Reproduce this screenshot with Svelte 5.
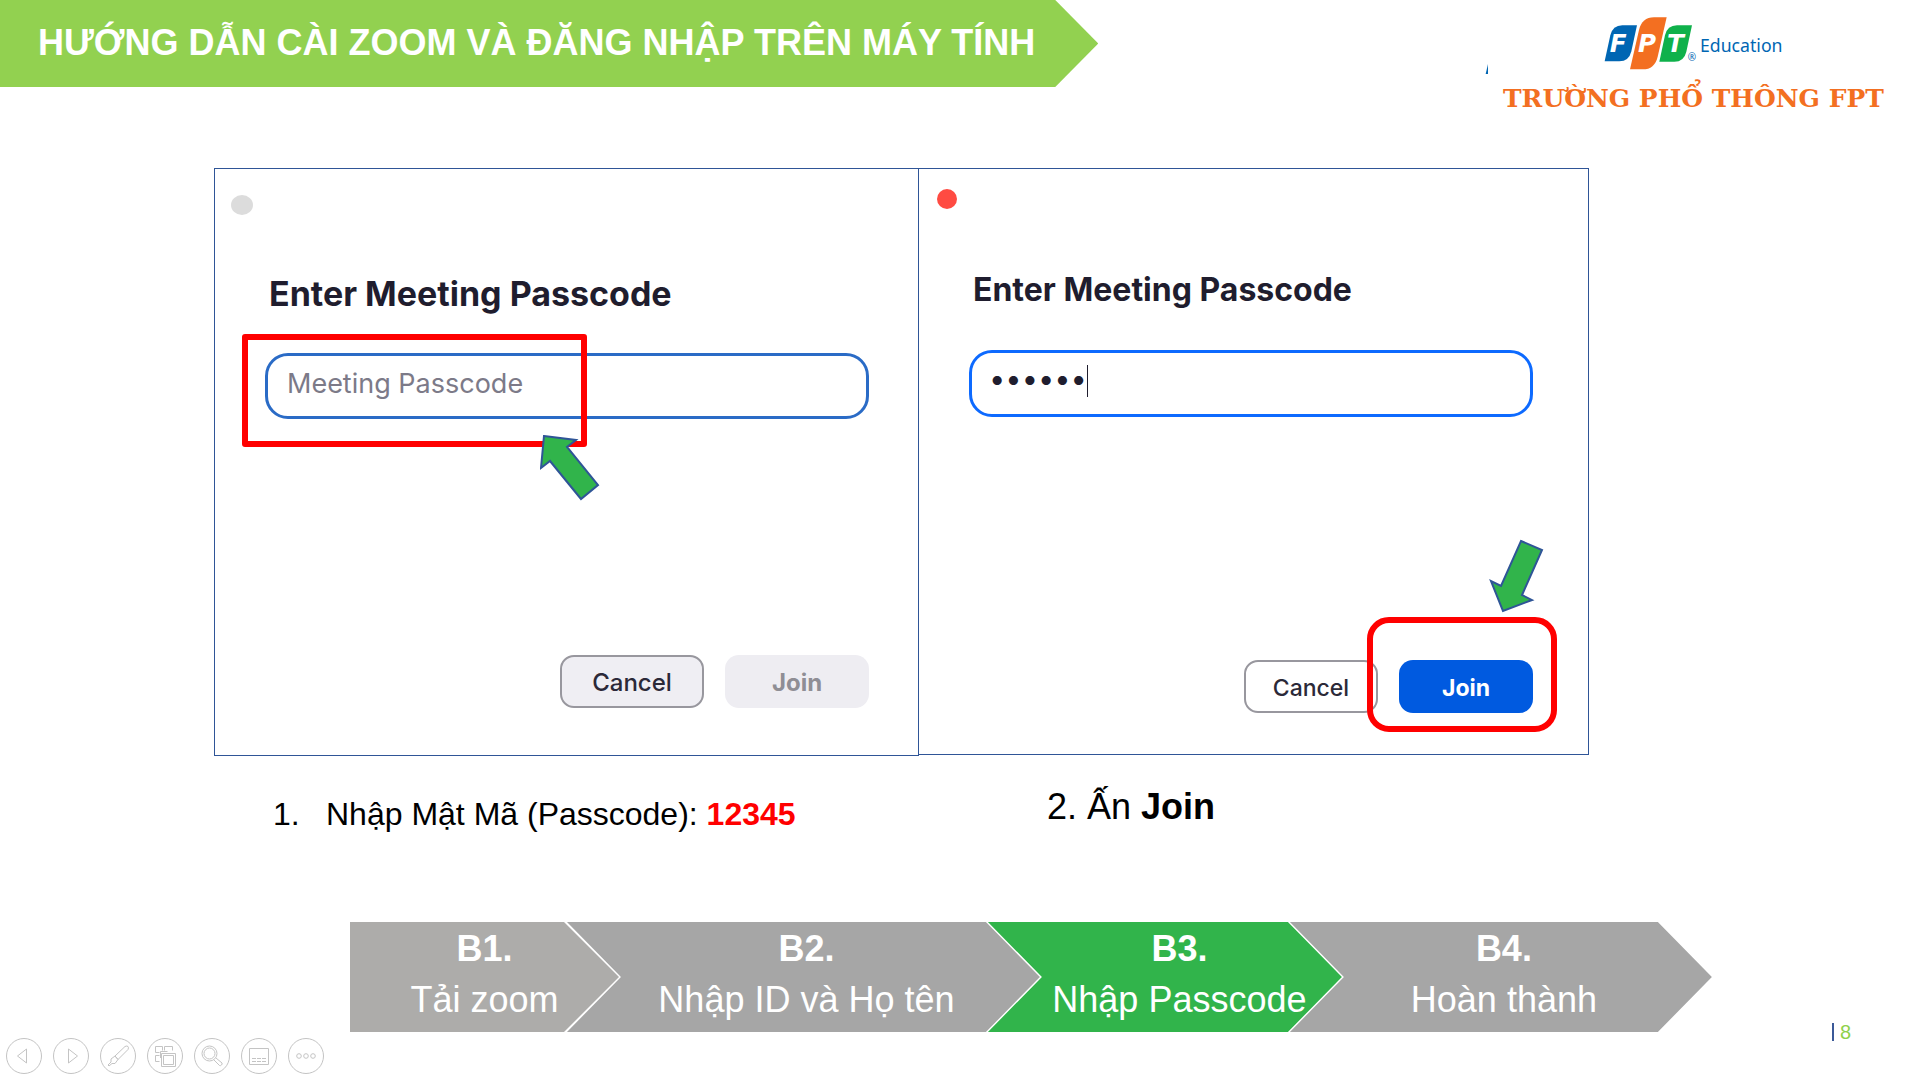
<script lang="ts">
	interface Step {
		code: string;
		label: string;
		active?: boolean;
	}

	const steps: Step[] = [
		{ code: 'B1.', label: 'Tải zoom' },
		{ code: 'B2.', label: 'Nhập ID và Họ tên' },
		{ code: 'B3.', label: 'Nhập Passcode', active: true },
		{ code: 'B4.', label: 'Hoàn thành' }
	];

	let first = $state('');
	let second = $state('123456');
</script>

<div class="slide">
	<header>
		<h1>HƯỚNG DẪN CÀI ZOOM VÀ ĐĂNG NHẬP TRÊN MÁY TÍNH</h1>
		<div class="brand">
			<svg viewBox="75 42 1200 186" width="400" height="62" role="img" aria-label="FPT Education">
				<path d="M84 192v30h-7z" fill="#0066b3" />
				<path d="M434 184l17-78q7-30 36-30h44l-17 78q-7 30-36 30z" fill="#0066b3" />
				<path d="M510 208l27-118q9-38 45-38h38l-27 118q-9 38-45 38z" fill="#f36f21" />
				<path d="M598 185l17-79q7-30 36-30h45l-17 79q-7 30-36 30z" fill="#0fb14b" />
				<g class="letters">
					<text x="449" y="157">F</text>
					<text x="534" y="157">P</text>
					<text x="621" y="157">T</text>
				</g>
				<text class="reg" x="683" y="184">®</text>
				<text class="edu" x="720" y="157">Education</text>
			</svg>
			<p>TRƯỜNG PHỔ THÔNG FPT</p>
		</div>
	</header>

	<main>
		<section class="left">
			<div class="dialog">
				<span class="dot"></span>
				<label for="passcode-1">Enter Meeting Passcode</label>
				<input id="passcode-1" type="text" placeholder="Meeting Passcode" bind:value={first} />
				<div class="actions">
					<button class="cancel">Cancel</button>
					<button class="join" disabled>Join</button>
				</div>
				<div class="mark"></div>
				<svg class="arrow" viewBox="540 435 60 66" width="60" height="66">
					<path d="M544 436l32 4-9 7 31 38-17 14-31-38-9 7z" />
				</svg>
			</div>
			<p class="caption">
				<span class="number">1.</span>Nhập Mật Mã (Passcode): <strong>12345</strong>
			</p>
		</section>

		<section class="right">
			<div class="dialog">
				<span class="dot"></span>
				<label for="passcode-2">Enter Meeting Passcode</label>
				<div class="field">
					<input id="passcode-2" type="password" bind:value={second} />
					<span class="caret"></span>
				</div>
				<div class="actions">
					<button class="cancel">Cancel</button>
					<button class="join">Join</button>
				</div>
				<div class="mark"></div>
				<svg class="arrow" viewBox="1489 539 55 74" width="55" height="74">
					<path d="M1521 541l21 9-20 45 10 5-29 11-12-30 10 5z" />
				</svg>
			</div>
			<p class="caption">2. Ấn <strong>Join</strong></p>
		</section>
	</main>

	<div class="progress">
		<ol>
			{#each steps as step}
				<li class:active={step.active}>
					<strong>{step.code}</strong>
					<span>{step.label}</span>
				</li>
			{/each}
		</ol>
		<span class="page">8</span>
	</div>

	<footer>
		<button aria-label="Previous">
			<svg viewBox="0 0 36 36"><path d="M20.500 11v14l-9-7z" /></svg>
		</button>
		<button aria-label="Next">
			<svg viewBox="0 0 36 36"><path d="M15.500 11v14l9-7z" /></svg>
		</button>
		<button aria-label="Pen">
			<svg viewBox="0 0 36 36">
				<path d="M15 18L25 8.500q2-1 3 0t0 3L18 21.500zM15 18l3 3.500-3 4-3 0-3 2.500-1-1 3-3 0-3z" />
			</svg>
		</button>
		<button aria-label="All slides">
			<svg viewBox="0 0 36 36">
				<path d="M12.500 14.500h-4v-6h7v4M17.500 12.500v-4h8v4M12.500 23.500h-4v-6h4" />
				<path d="M13.500 20v-6.500h7" />
				<path d="M14.500 15.500h14v13h-14zM16.500 17.500h10v9h-10z" />
			</svg>
		</button>
		<button aria-label="Zoom">
			<svg viewBox="0 0 36 36">
				<circle cx="15.500" cy="15.500" r="7.500" />
				<circle cx="15.500" cy="15.500" r="5.500" />
				<path d="M20 22l5.500 5.500q1 .5 2-.5t.5-2L22 20" />
			</svg>
		</button>
		<button aria-label="Subtitles">
			<svg viewBox="0 0 36 36">
				<path d="M8.500 10.500h19v16h-19z" />
				<path d="M11 20.500h15M11 23.500h15" stroke-dasharray="4 1" />
			</svg>
		</button>
		<button aria-label="More">
			<svg viewBox="0 0 36 36">
				<circle cx="11" cy="18" r="2.300" />
				<circle cx="18" cy="18" r="2.300" />
				<circle cx="25" cy="18" r="2.300" />
			</svg>
		</button>
	</footer>
</div>

<style>
	:global(body) {
		margin: 0;
		background: #fff;
	}

	.slide {
		box-sizing: border-box;
		min-height: 100vh;
		display: flex;
		flex-direction: column;
		font-family: 'Liberation Sans', Arial, sans-serif;
		color: #000;
	}

	h1,
	p,
	ol {
		margin: 0;
		padding: 0;
	}

	header {
		display: flex;
		justify-content: space-between;
		align-items: flex-start;
		min-height: 168px;
	}

	h1 {
		box-sizing: border-box;
		height: 87px;
		padding: 0 63px 0 38px;
		font-size: 36px;
		line-height: 86px;
		white-space: nowrap;
		color: #fff;
		background: #92d150;
		clip-path: polygon(0 0, calc(100% - 43px) 0, 100% 50%, calc(100% - 43px) 100%, 0 100%);
	}

	.brand {
		width: 400px;
		padding: 14px 35px 0 0;

		svg {
			display: block;
		}

		.letters {
			font: italic bold 74px 'DejaVu Sans', sans-serif;
			fill: #fff;
		}

		.edu {
			font: 53px 'Noto Sans', sans-serif;
			fill: #0066b3;
		}

		.reg {
			font: 30px 'Noto Sans', sans-serif;
			fill: #0066b3;
		}

		p {
			padding: 3px 0 0 18px;
			font: bold 25px/40px 'DejaVu Serif', serif;
			white-space: nowrap;
			color: #f36f21;
		}
	}

	main {
		display: grid;
		grid-template-columns: 705fr 670fr;
		margin: 0 331px 0 214px;
	}

	.dialog {
		position: relative;
		box-sizing: border-box;
		min-height: 588px;
		display: flex;
		flex-direction: column;
		padding: 26px 49px 47px 50px;
		border: 1px solid #2f5597;
		font-family: Inter, sans-serif;
	}

	.right .dialog {
		min-height: 587px;
		padding: 20px 55px 41px 50px;
		border-left: 0;
	}

	.dot {
		width: 22px;
		height: 20px;
		margin-left: -34px;
		border-radius: 50%;
		background: #dcdcdc;
	}

	.right .dot {
		width: 20px;
		margin-left: -32px;
		background: #ff4b42;
	}

	label {
		margin: 59px 0 39px 4px;
		font-size: 34px;
		font-weight: 700;
		line-height: 40px;
		color: #1f1d2e;
	}

	.right label {
		margin: 61px 0 40px 4px;
		font-size: 32px;
	}

	input {
		box-sizing: border-box;
		width: 100%;
		height: 66px;
		padding: 0 19px 6px;
		border: 3px solid #2a6bc6;
		border-radius: 23px;
		background: transparent;
		font: 27px Inter, sans-serif;
		color: #1f1d2e;
		outline: none;
	}

	input::placeholder {
		color: #7c7a88;
		opacity: 1;
	}

	.field {
		position: relative;

		input {
			height: 67px;
			padding: 0 17px 11px;
			border-color: #0d6aff;
			font-size: 29px;
		}
	}

	.caret {
		position: absolute;
		top: 15px;
		left: 118px;
		width: 1px;
		height: 32px;
		background: #1f1d2e;
	}

	.actions {
		display: flex;
		justify-content: flex-end;
		gap: 21px;
		margin-top: auto;

		button {
			width: 144px;
			height: 53px;
			padding: 2px 0 0;
			border: 2px solid #98979e;
			border-radius: 14px;
			background: #efeef3;
			font: 500 24px Inter, sans-serif;
			color: #2b2938;
		}

		.join {
			border-color: transparent;
			background: #eeedf2 border-box;
			font-weight: 700;
			color: #8f8e95;
		}
	}

	.right .actions {
		button {
			width: 134px;
			background: #fff;
			font-size: 23px;
		}

		.join {
			background: #005ae0 border-box;
			color: #fff;
		}
	}

	.mark {
		position: absolute;
		box-sizing: border-box;
		top: 165px;
		left: 27px;
		width: 345px;
		height: 113px;
		border: 6px solid #f00;
		border-radius: 3px;
	}

	.right .mark {
		inset: auto 31px 22px auto;
		width: 190px;
		height: 115px;
		border-radius: 22px;
	}

	.arrow {
		position: absolute;
		top: 266px;
		left: 325px;
		fill: #31b44b;
		stroke: #2f5597;
		stroke-width: 2;
	}

	.right .arrow {
		inset: auto 44px 141px auto;
	}

	.caption {
		padding: 38px 0 0 59px;
		font-size: 32px;
		line-height: 40px;
		white-space: nowrap;
	}

	.number {
		display: inline-block;
		width: 53px;
	}

	.left strong {
		color: #f00;
	}

	.right .caption {
		padding: 32px 0 0 128px;
		font-size: 36px;
	}

	.progress {
		display: flex;
		align-items: flex-end;
		justify-content: space-between;
		margin-top: auto;
		padding: 0 69px 0 350px;
	}

	ol {
		flex: 1;
		display: grid;
		grid-template-columns: 269fr 421fr 302fr 370fr;
		margin-right: 120px;
		list-style: none;
	}

	li {
		box-sizing: border-box;
		height: 110px;
		display: flex;
		flex-direction: column;
		align-items: center;
		min-width: 0;
		margin-left: -52px;
		padding: 1px 0 0 6px;
		font-size: 36px;
		line-height: 51px;
		white-space: nowrap;
		color: #fff;
		background: #a6a6a6;
		clip-path: polygon(0 0, calc(100% - 54px) 0, 100% 50%, calc(100% - 54px) 100%, 0 100%, 54px 50%);
	}

	li:first-child {
		margin-left: 0;
		padding-left: 0;
		background: #adacaa;
		clip-path: polygon(0 0, calc(100% - 55px) 0, 100% 50%, calc(100% - 55px) 100%, 0 100%);
	}

	li.active {
		padding-left: 29px;
		background: #31b44b;
	}

	.page {
		margin-bottom: -9px;
		padding-left: 6px;
		border-left: 2px solid #3b5998;
		font-size: 20px;
		line-height: 18px;
		color: #8ed14a;
	}

	footer {
		display: flex;
		gap: 11px;
		padding: 6px;

		button {
			width: 36px;
			height: 36px;
			padding: 0;
			border: 1px solid #c4c4c4;
			border-radius: 50%;
			background: transparent;
		}

		svg {
			display: block;
			width: 36px;
			height: 36px;
			margin: -1px;
			fill: none;
			stroke: #c4c4c4;
		}
	}
</style>
